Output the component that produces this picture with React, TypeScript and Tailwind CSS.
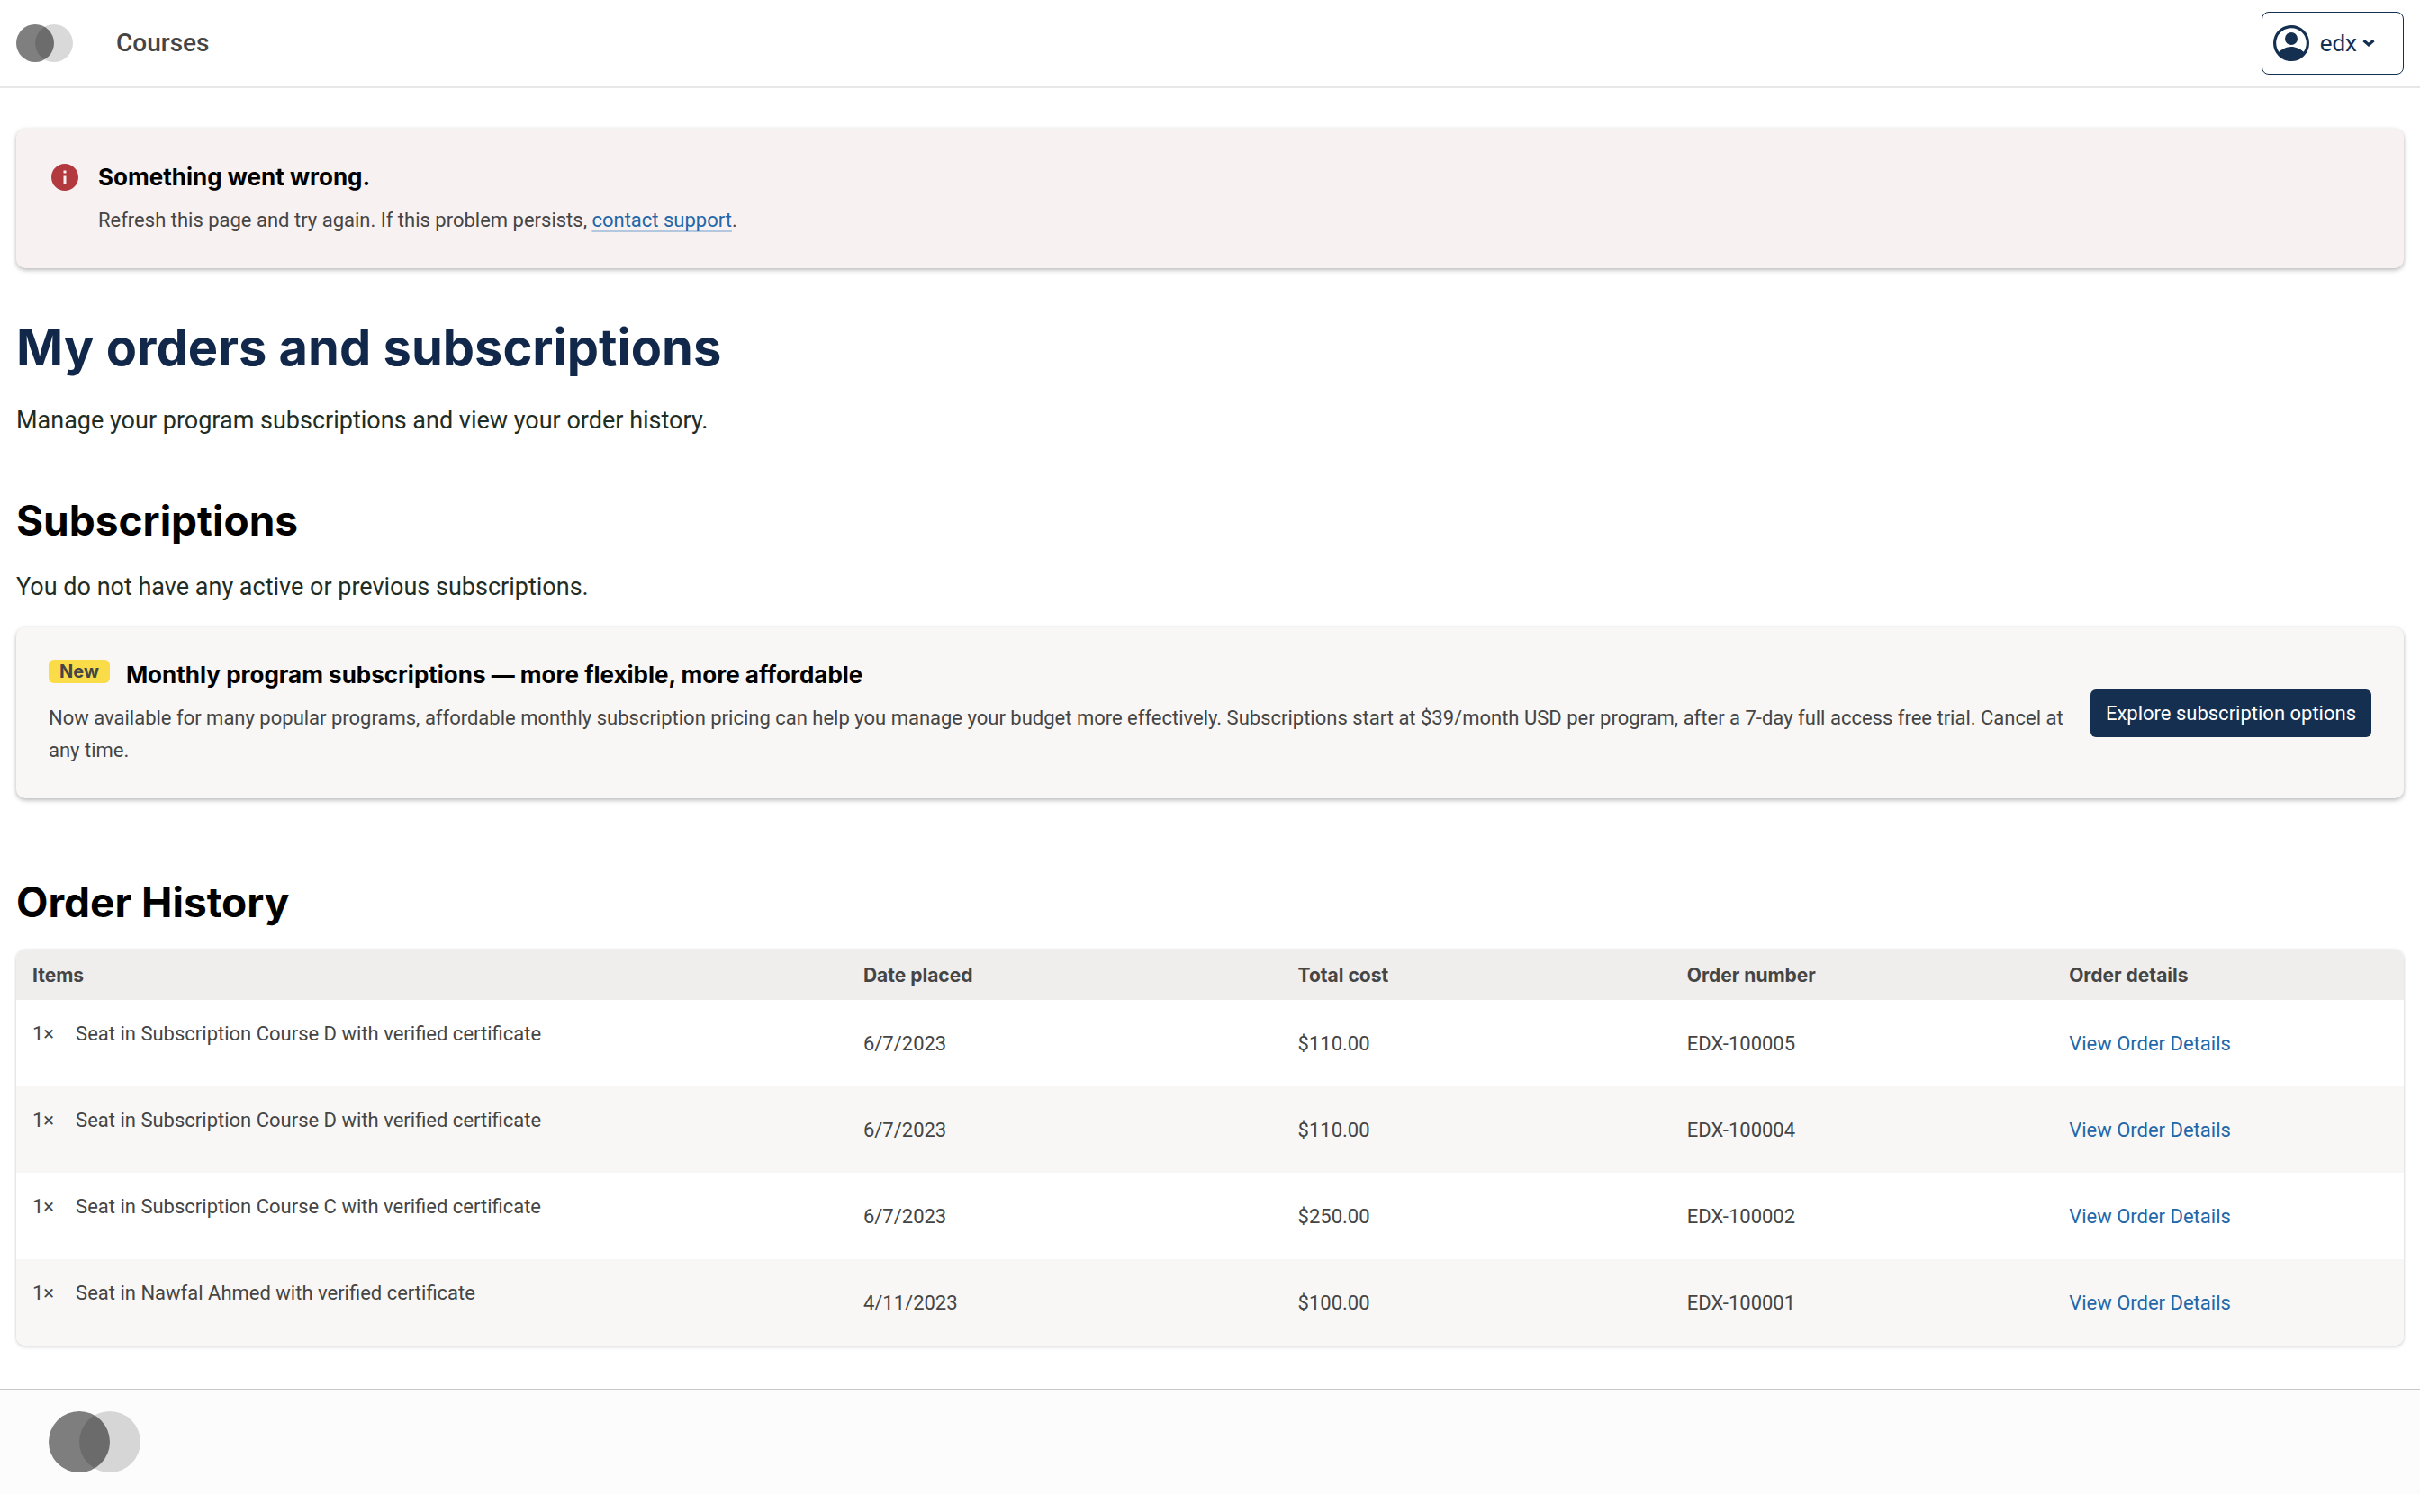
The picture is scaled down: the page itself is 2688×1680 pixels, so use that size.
import { MdInfo } from "react-icons/md";

const orders = [
  { item: "Seat in Subscription Course D with verified certificate", date: "6/7/2023", total: "$110.00", number: "EDX-100005" },
  { item: "Seat in Subscription Course D with verified certificate", date: "6/7/2023", total: "$110.00", number: "EDX-100004" },
  { item: "Seat in Subscription Course C with verified certificate", date: "6/7/2023", total: "$250.00", number: "EDX-100002" },
  { item: "Seat in Nawfal Ahmed with verified certificate", date: "4/11/2023", total: "$100.00", number: "EDX-100001" },
];

function Logo({ className }: { className: string }) {
  return (
    <svg className={className} viewBox="0 0 63 42" role="img" aria-label="Home">
      <circle cx="42" cy="21" r="21" fill="#000" fillOpacity="0.15" />
      <circle cx="21" cy="21" r="21" fill="#000" fillOpacity="0.5" />
    </svg>
  );
}

function Avatar() {
  return (
    <svg className="size-10" viewBox="0 0 40 40" aria-hidden="true">
      <defs>
        <clipPath id="avatar-clip">
          <circle cx="20" cy="20" r="19" />
        </clipPath>
      </defs>
      <circle cx="20" cy="20" r="18.4" fill="none" stroke="currentColor" strokeWidth="3.2" />
      <circle cx="20" cy="15" r="7" fill="currentColor" />
      <path clipPath="url(#avatar-clip)" d="M5 31 C10 26 15 24 20 24 C25 24 30 26 35 31 L35 40 H5 Z" fill="currentColor" />
    </svg>
  );
}

function Header() {
  return (
    <header className="flex h-[98px] items-center border-b-2 border-[#e7e7e7] px-[18px]">
      <a href="#home">
        <Logo className="h-[42px] w-[63px]" />
      </a>
      <nav className="ml-12">
        <a href="#courses" className="text-[28px] font-medium text-[#454545]">Courses</a>
      </nav>
      <button
        type="button"
        aria-haspopup="menu"
        className="ml-auto flex h-[70px] items-center rounded-lg border border-[#152f51] pr-[31px] pl-3 text-[26px] text-[#152f51]"
      >
        <Avatar />
        <span className="ml-3">edx</span>
        <svg className="ml-1.5 h-2 w-3.5" viewBox="0 0 14 8" fill="none" stroke="currentColor" strokeWidth="3.2" aria-hidden="true">
          <path d="M1.5 1 L7 5.8 L12.5 1" />
        </svg>
      </button>
    </header>
  );
}

function ErrorAlert() {
  return (
    <div
      role="alert"
      className="mt-[45px] flex gap-[19px] rounded-[10px] bg-[#f8f1f1] px-9 pt-9 pb-[35px] shadow-[0_2px_4px_rgba(0,0,0,0.15),0_2px_6px_rgba(0,0,0,0.15)]"
    >
      <MdInfo className="size-9 shrink-0 text-[#b2393e]" aria-hidden="true" />
      <div>
        <h2 className="font-[Inter,sans-serif] text-[26px] leading-9 font-bold text-black">Something went wrong.</h2>
        <p className="mt-3 text-[22px] leading-9">
          Refresh this page and try again. If this problem persists,{" "}
          <a href="#support" className="text-[#2367a9] underline decoration-[#b3c7df] decoration-2 underline-offset-4">contact support</a>.
        </p>
      </div>
    </div>
  );
}

function SubscriptionCard() {
  return (
    <div className="mt-[22px] flex items-center gap-5 rounded-[10px] bg-[#f8f7f5] px-9 py-[35px] shadow-[0_2px_4px_rgba(0,0,0,0.15),0_2px_6px_rgba(0,0,0,0.15)]">
      <div className="flex-1">
        <div className="flex items-start">
          <span className="mt-px rounded-md bg-[#fadb48] px-3 font-[Inter,sans-serif] text-[20px] leading-[26px] font-bold">New</span>
          <h3 className="ml-[18px] font-[Inter,sans-serif] text-[26px] leading-9 font-bold text-black">
            Monthly program subscriptions — more flexible, more affordable
          </h3>
        </div>
        <p className="mt-3 text-[22px] leading-9">
          Now available for many popular programs, affordable monthly subscription pricing can help you manage your budget more
          effectively. Subscriptions start at $39/month USD per program, after a 7-day full access free trial. Cancel at any time.
        </p>
      </div>
      <button type="button" className="h-[53px] shrink-0 rounded-md bg-[#152f51] px-[17px] text-[22px] text-white">
        Explore subscription options
      </button>
    </div>
  );
}

function OrderTable() {
  return (
    <div className="mt-[25px] overflow-hidden rounded-[10px] shadow-[0_2px_4px_rgba(0,0,0,0.12),0_0_3px_rgba(0,0,0,0.12)]">
      <table className="w-full table-fixed text-left text-[22px] leading-9">
        <thead className="bg-[#efeeec] font-[Inter,sans-serif] text-[21px]">
          <tr className="h-14">
            <th className="w-[34.8%] px-[18px] pt-0.5 font-bold">Items</th>
            <th className="w-[18.2%] px-[18px] pt-0.5 font-bold">Date placed</th>
            <th className="w-[16.3%] px-[18px] pt-0.5 font-bold">Total cost</th>
            <th className="w-[16%] px-[18px] pt-0.5 font-bold">Order number</th>
            <th className="px-[18px] pt-0.5 font-bold">Order details</th>
          </tr>
        </thead>
        <tbody>
          {orders.map((order) => (
            <tr key={order.number} className="h-24 bg-white even:bg-[#f8f7f5]">
              <td className="px-[18px] pt-5 align-top">
                <div className="flex gap-6">
                  <span>1×</span>
                  <span>{order.item}</span>
                </div>
              </td>
              <td className="px-[18px] pt-0.5">{order.date}</td>
              <td className="px-[18px] pt-0.5">{order.total}</td>
              <td className="px-[18px] pt-0.5">{order.number}</td>
              <td className="px-[18px] pt-0.5">
                <a href={`#${order.number}`} className="text-[#2367a9]">View Order Details</a>
              </td>
            </tr>
          ))}
        </tbody>
      </table>
    </div>
  );
}

export default function App() {
  return (
    <div className="bg-white font-[Roboto,sans-serif] text-[#454545]">
      <Header />
      <main className="px-[18px]">
        <ErrorAlert />
        <h1 className="mt-14 font-[Inter,sans-serif] text-[56px] leading-[64px] font-bold text-[#12284a]">My orders and subscriptions</h1>
        <p className="mt-[26px] text-[27px] leading-[46px] text-[#1f2d24]">
          Manage your program subscriptions and view your order history.
        </p>
        <section>
          <h2 className="mt-[60px] font-[Inter,sans-serif] text-[46px] leading-14 font-bold text-black">Subscriptions</h2>
          <p className="mt-[23px] text-[27px] leading-[46px] text-[#1f2d24]">You do not have any active or previous subscriptions.</p>
          <SubscriptionCard />
        </section>
        <section>
          <h2 className="mt-[87px] font-[Inter,sans-serif] text-[46px] leading-14 font-bold text-black">Order History</h2>
          <OrderTable />
        </section>
      </main>
      <footer className="mt-12 border-t border-[#c8c8c8] bg-[#fcfcfc] px-[54px] py-6">
        <a href="#home" className="block w-fit">
          <Logo className="h-[68px] w-[102px]" />
        </a>
      </footer>
    </div>
  );
}
